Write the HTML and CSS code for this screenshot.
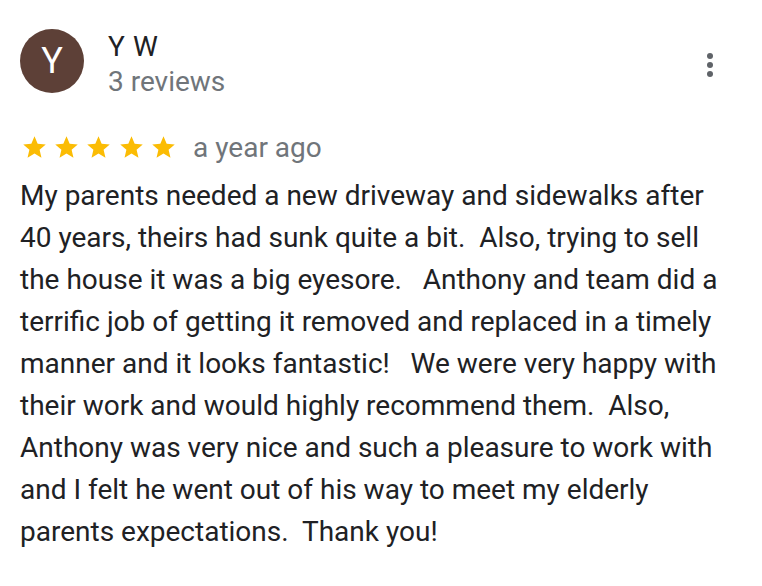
FILE: index.html
```html
<!DOCTYPE html>
<html>
<head>
<meta charset="utf-8">
<link rel="stylesheet" href="styles.css">
</head>
<body>
<div class="review">
  <div class="header">
    <div class="avatar">Y</div>
    <div class="who">
      <div class="name">Y W</div>
      <div class="count">3 reviews</div>
    </div>
    <svg class="menu" viewBox="0 0 24 24" width="36" height="36"><circle cx="12" cy="6" r="2"/><circle cx="12" cy="12" r="2"/><circle cx="12" cy="18" r="2"/></svg>
  </div>
  <div class="meta">
    <div class="stars">
      <svg viewBox="0 0 24 24"><path d="M12 17.27L18.18 21l-1.64-7.03L22 9.24l-7.19-.61L12 2 9.19 8.63 2 9.24l5.46 4.730L5.82 21z"/></svg>
      <svg viewBox="0 0 24 24"><path d="M12 17.27L18.18 21l-1.64-7.03L22 9.24l-7.19-.61L12 2 9.19 8.63 2 9.24l5.46 4.73L5.82 21z"/></svg>
      <svg viewBox="0 0 24 24"><path d="M12 17.27L18.18 21l-1.64-7.03L22 9.24l-7.19-.61L12 2 9.19 8.63 2 9.24l5.46 4.73L5.82 21z"/></svg>
      <svg viewBox="0 0 24 24"><path d="M12 17.27L18.18 21l-1.64-7.03L22 9.24l-7.19-.61L12 2 9.19 8.63 2 9.24l5.46 4.73L5.82 21z"/></svg>
      <svg viewBox="0 0 24 24"><path d="M12 17.27L18.18 21l-1.64-7.03L22 9.24l-7.19-.61L12 2 9.19 8.63 2 9.24l5.46 4.73L5.82 21z"/></svg>
    </div>
    <span class="date">a year ago</span>
  </div>
  <p class="text">My parents needed a new driveway and sidewalks after 40 years, theirs had sunk quite a bit.&nbsp; Also, trying to sell the house it was a big eyesore.&nbsp;&nbsp; Anthony and team did a terrific job of getting it removed and replaced in a timely manner and it looks fantastic!&nbsp;&nbsp; We were very happy with their work and would highly recommend them.&nbsp; Also, Anthony was very nice and such a pleasure to work with and I felt he went out of his way to meet my elderly parents expectations.&nbsp; Thank you!</p>
</div>
</body>
</html>
```

FILE: styles.css
```css
html, body {
  margin: 0;
  padding: 0;
  background: #fff;
}
body {
  font-family: Roboto, "Liberation Sans", sans-serif;
  color: #202124;
}
.review {
  padding: 29px 20px 0 20px;
}
.header {
  display: flex;
  align-items: flex-start;
}
.avatar {
  width: 64px;
  height: 64px;
  border-radius: 50%;
  background: #5d4037;
  color: #fff;
  font-size: 36px;
  display: flex;
  align-items: center;
  justify-content: center;
  flex: none;
}
.who {
  margin-left: 24px;
  flex: 1;
  margin-top: 1px;
}
.name {
  font-size: 28px;
  line-height: 34px;
  color: #202124;
  letter-spacing: 0.6px;
}
.count {
  font-size: 28px;
  line-height: 35px;
  color: #70757a;
}
.menu {
  fill: #5f6368;
  margin-top: 18px;
  margin-right: 14px;
}
.meta {
  display: flex;
  align-items: center;
  margin-top: 32px;
}
.stars {
  display: flex;
  gap: 5.4px;
  margin-left: 0.5px;
}
.stars svg {
  width: 27px;
  height: 27px;
  fill: #fbbc04;
  display: block;
}
.date {
  font-size: 28px;
  color: #70757a;
  margin-left: 16px;
}
.text {
  margin: 11px 0 0 0;
  font-size: 28px;
  line-height: 42px;
  color: #202124;
  width: 722px;
}
```
